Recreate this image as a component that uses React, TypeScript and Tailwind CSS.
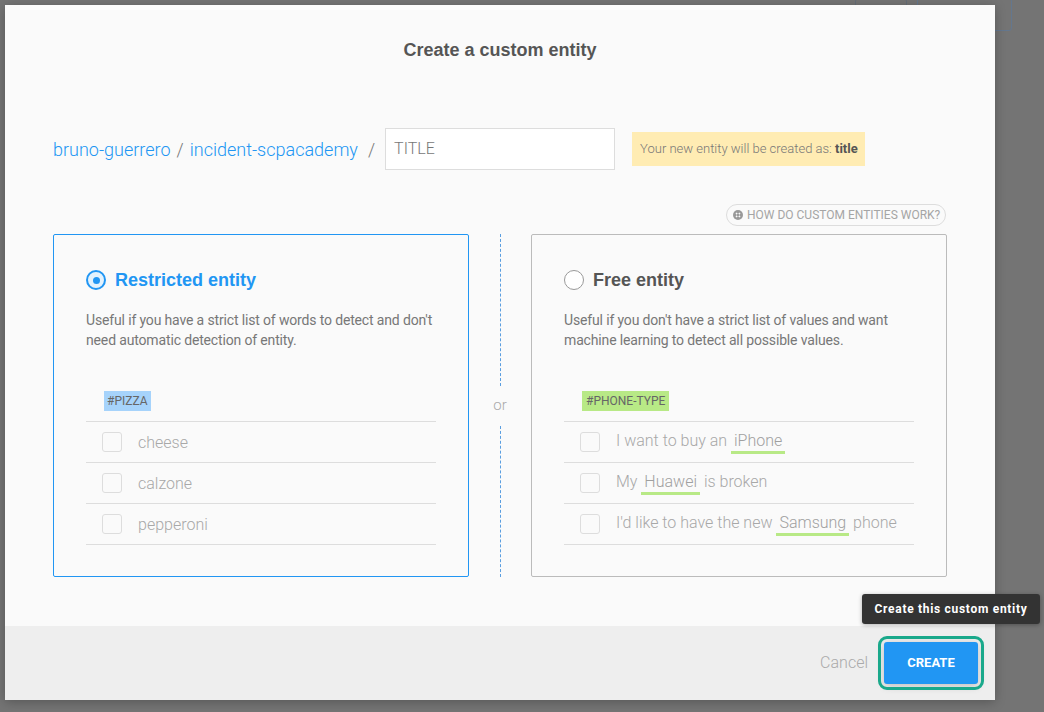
import React from "react";

const Check = () => (
  <span className="block w-[20px] h-[20px] rounded-[3px] border border-[#dddddd] bg-[#fafafa] shrink-0" />
);

const Row = ({ children }: { children: React.ReactNode }) => (
  <div className="flex items-center h-[41px] border-b border-[#dddddd] pl-[16px]">
    <Check />
    <div className="ml-[16px] text-[16px] font-light text-[#a8a8a8] whitespace-nowrap leading-[19px]">{children}</div>
  </div>
);

const Ent = ({ children }: { children: React.ReactNode }) => (
  <span className="inline-block px-[3px] pb-[1px] border-b-[3px] border-[#b8e986] text-[#a0a0a0]">{children}</span>
);

export default function App() {
  return (
    <div
      className="relative w-[1044px] h-[712px] overflow-hidden bg-[#747474]"
      style={{ fontFamily: "Roboto, 'Liberation Sans', sans-serif" }}
    >
      {/* faint background page */}
      <div className="absolute right-[32px] top-[-2px] flex gap-[10px] opacity-60">
        <div className="w-[52px] h-[33px] border border-[#5b6a7a] rounded-[3px]" />
        <div className="w-[95px] h-[33px] border border-[#5b7aa0] rounded-[3px]" />
      </div>

      {/* modal */}
      <div className="absolute left-[5px] top-[5px] w-[990px] h-[695px] bg-[#fafafa] flex flex-col shadow-[0_2px_10px_rgba(0,0,0,0.25)]">
        <div
          className="pt-[35px] text-center text-[18px] leading-[20px] font-bold text-[#555555]"
          style={{ fontFamily: "'Liberation Sans', Arial, sans-serif" }}
        >
          Create a custom entity
        </div>

        {/* breadcrumb */}
        <div className="mt-[68px] px-[48px] flex items-center h-[42px]">
          <span className="text-[18px] font-light text-[#2196f3]">bruno-guerrero</span>
          <span className="text-[18px] font-light text-[#777777] mx-[6px]">/</span>
          <span className="text-[18px] font-light text-[#2196f3]">incident-scpacademy</span>
          <span className="text-[18px] font-light text-[#777777] ml-[10px] mr-[10px]">/</span>
          <div className="w-[230px] h-[42px] bg-white border border-[#dddddd] flex items-center pl-[8px] text-[16px] font-light text-[#777777]">
            TITLE
          </div>
          <div className="ml-[17px] h-[34px] w-[233px] bg-[#ffecb3] flex items-center pl-[8px] text-[13px] font-light text-[#777777] whitespace-nowrap">
            Your new entity will be created as:&nbsp;<b className="font-bold text-[#555555]">title</b>
          </div>
        </div>

        {/* help pill */}
        <div className="mt-[34px] px-[49px] flex justify-end">
          <div className="h-[22px] w-[220px] rounded-full border border-[#dddddd] flex items-center pl-[6px] text-[12px] text-[#a5a5a5] uppercase whitespace-nowrap">
            <svg width="10" height="10" viewBox="0 0 10 10" className="mr-[4px]">
              <circle cx="5" cy="5" r="5" fill="#999" />
              <path d="M3 3 L7 7 M7 3 L3 7" stroke="#fafafa" strokeWidth="1.5" />
              <circle cx="5" cy="5" r="1.2" fill="#999" />
            </svg>
            How do custom entities work?
          </div>
        </div>

        {/* cards */}
        <div className="mt-[8px] px-[48px] flex">
          <div className="w-[416px] h-[343px] border border-[#2196f3] rounded-[2px] pt-[35px] px-[32px]">
            <div className="flex items-center h-[20px]">
              <span className="w-[20px] h-[20px] rounded-full border-2 border-[#2196f3] bg-[#e3f2fd] flex items-center justify-center">
                <span className="w-[7px] h-[7px] rounded-full bg-[#2196f3]" />
              </span>
              <span
                className="ml-[9px] text-[18px] font-bold text-[#2196f3]"
                style={{ fontFamily: "'Liberation Sans', Arial, sans-serif" }}
              >
                Restricted entity
              </span>
            </div>
            <p className="mt-[20px] text-[14px] leading-[20px] text-[#777777] whitespace-nowrap tracking-[-0.15px]">
              Useful if you have a strict list of words to detect and don't
              <br />
              need automatic detection of entity.
            </p>
            <div className="mt-[41px] pl-[18px] h-[20px] flex">
              <span className="flex h-[20px] items-center px-[3px] bg-[#a6d3fb] text-[12px] leading-[20px] text-[#666666]">#PIZZA</span>
            </div>
            <div className="mt-[10px] border-t border-[#dddddd]">
              <Row>cheese</Row>
              <Row>calzone</Row>
              <Row>pepperoni</Row>
            </div>
          </div>

          <div className="w-[62px] flex flex-col items-center">
            <div className="flex-1 border-l border-dashed border-[#5a9ee0]" />
            <div className="h-[40px] flex items-center text-[15px] font-light text-[#aaaaaa]">or</div>
            <div className="flex-1 border-l border-dashed border-[#5a9ee0]" />
          </div>

          <div className="w-[416px] h-[343px] border border-[#bbbbbb] rounded-[2px] pt-[35px] px-[32px]">
            <div className="flex items-center h-[20px]">
              <span className="w-[20px] h-[20px] rounded-full border-[1.5px] border-[#999999] bg-white" />
              <span
                className="ml-[9px] text-[18px] font-bold text-[#555555]"
                style={{ fontFamily: "'Liberation Sans', Arial, sans-serif" }}
              >
                Free entity
              </span>
            </div>
            <p className="mt-[20px] text-[14px] leading-[20px] text-[#777777] whitespace-nowrap tracking-[-0.15px]">
              Useful if you don't have a strict list of values and want
              <br />
              machine learning to detect all possible values.
            </p>
            <div className="mt-[41px] pl-[18px] h-[20px] flex">
              <span className="flex h-[20px] items-center px-[4px] bg-[#b8e986] text-[12px] leading-[20px] text-[#666666]">#PHONE-TYPE</span>
            </div>
            <div className="mt-[10px] border-t border-[#dddddd]">
              <Row>
                I want to buy an <Ent>iPhone</Ent>
              </Row>
              <Row>
                My <Ent>Huawei</Ent> is broken
              </Row>
              <Row>
                I'd like to have the new <Ent>Samsung</Ent> phone
              </Row>
            </div>
          </div>
        </div>

        {/* footer */}
        <div className="mt-auto h-[74px] bg-[#eeeeee] flex items-center justify-end pr-[17px]">
          <span className="text-[16px] font-light text-[#aaaaaa] mr-[16px]">Cancel</span>
          <button className="w-[94px] h-[42px] rounded-[3px] bg-[#2196f3] text-white text-[13px] font-bold outline-[3px] outline-solid outline-offset-[3px] outline-[#1aa98b] shadow-[0_2px_8px_rgba(0,0,0,0.2)]">
            CREATE
          </button>
        </div>

        {/* tooltip */}
        <div className="absolute right-[-45px] top-[589px] h-[30px] w-[178px] rounded-[3px] bg-[#333333] flex items-center justify-center text-[12px] font-bold text-white tracking-[0.7px] shadow-[0_1px_4px_rgba(0,0,0,0.3)]">
          Create this custom entity
        </div>
      </div>
    </div>
  );
}
